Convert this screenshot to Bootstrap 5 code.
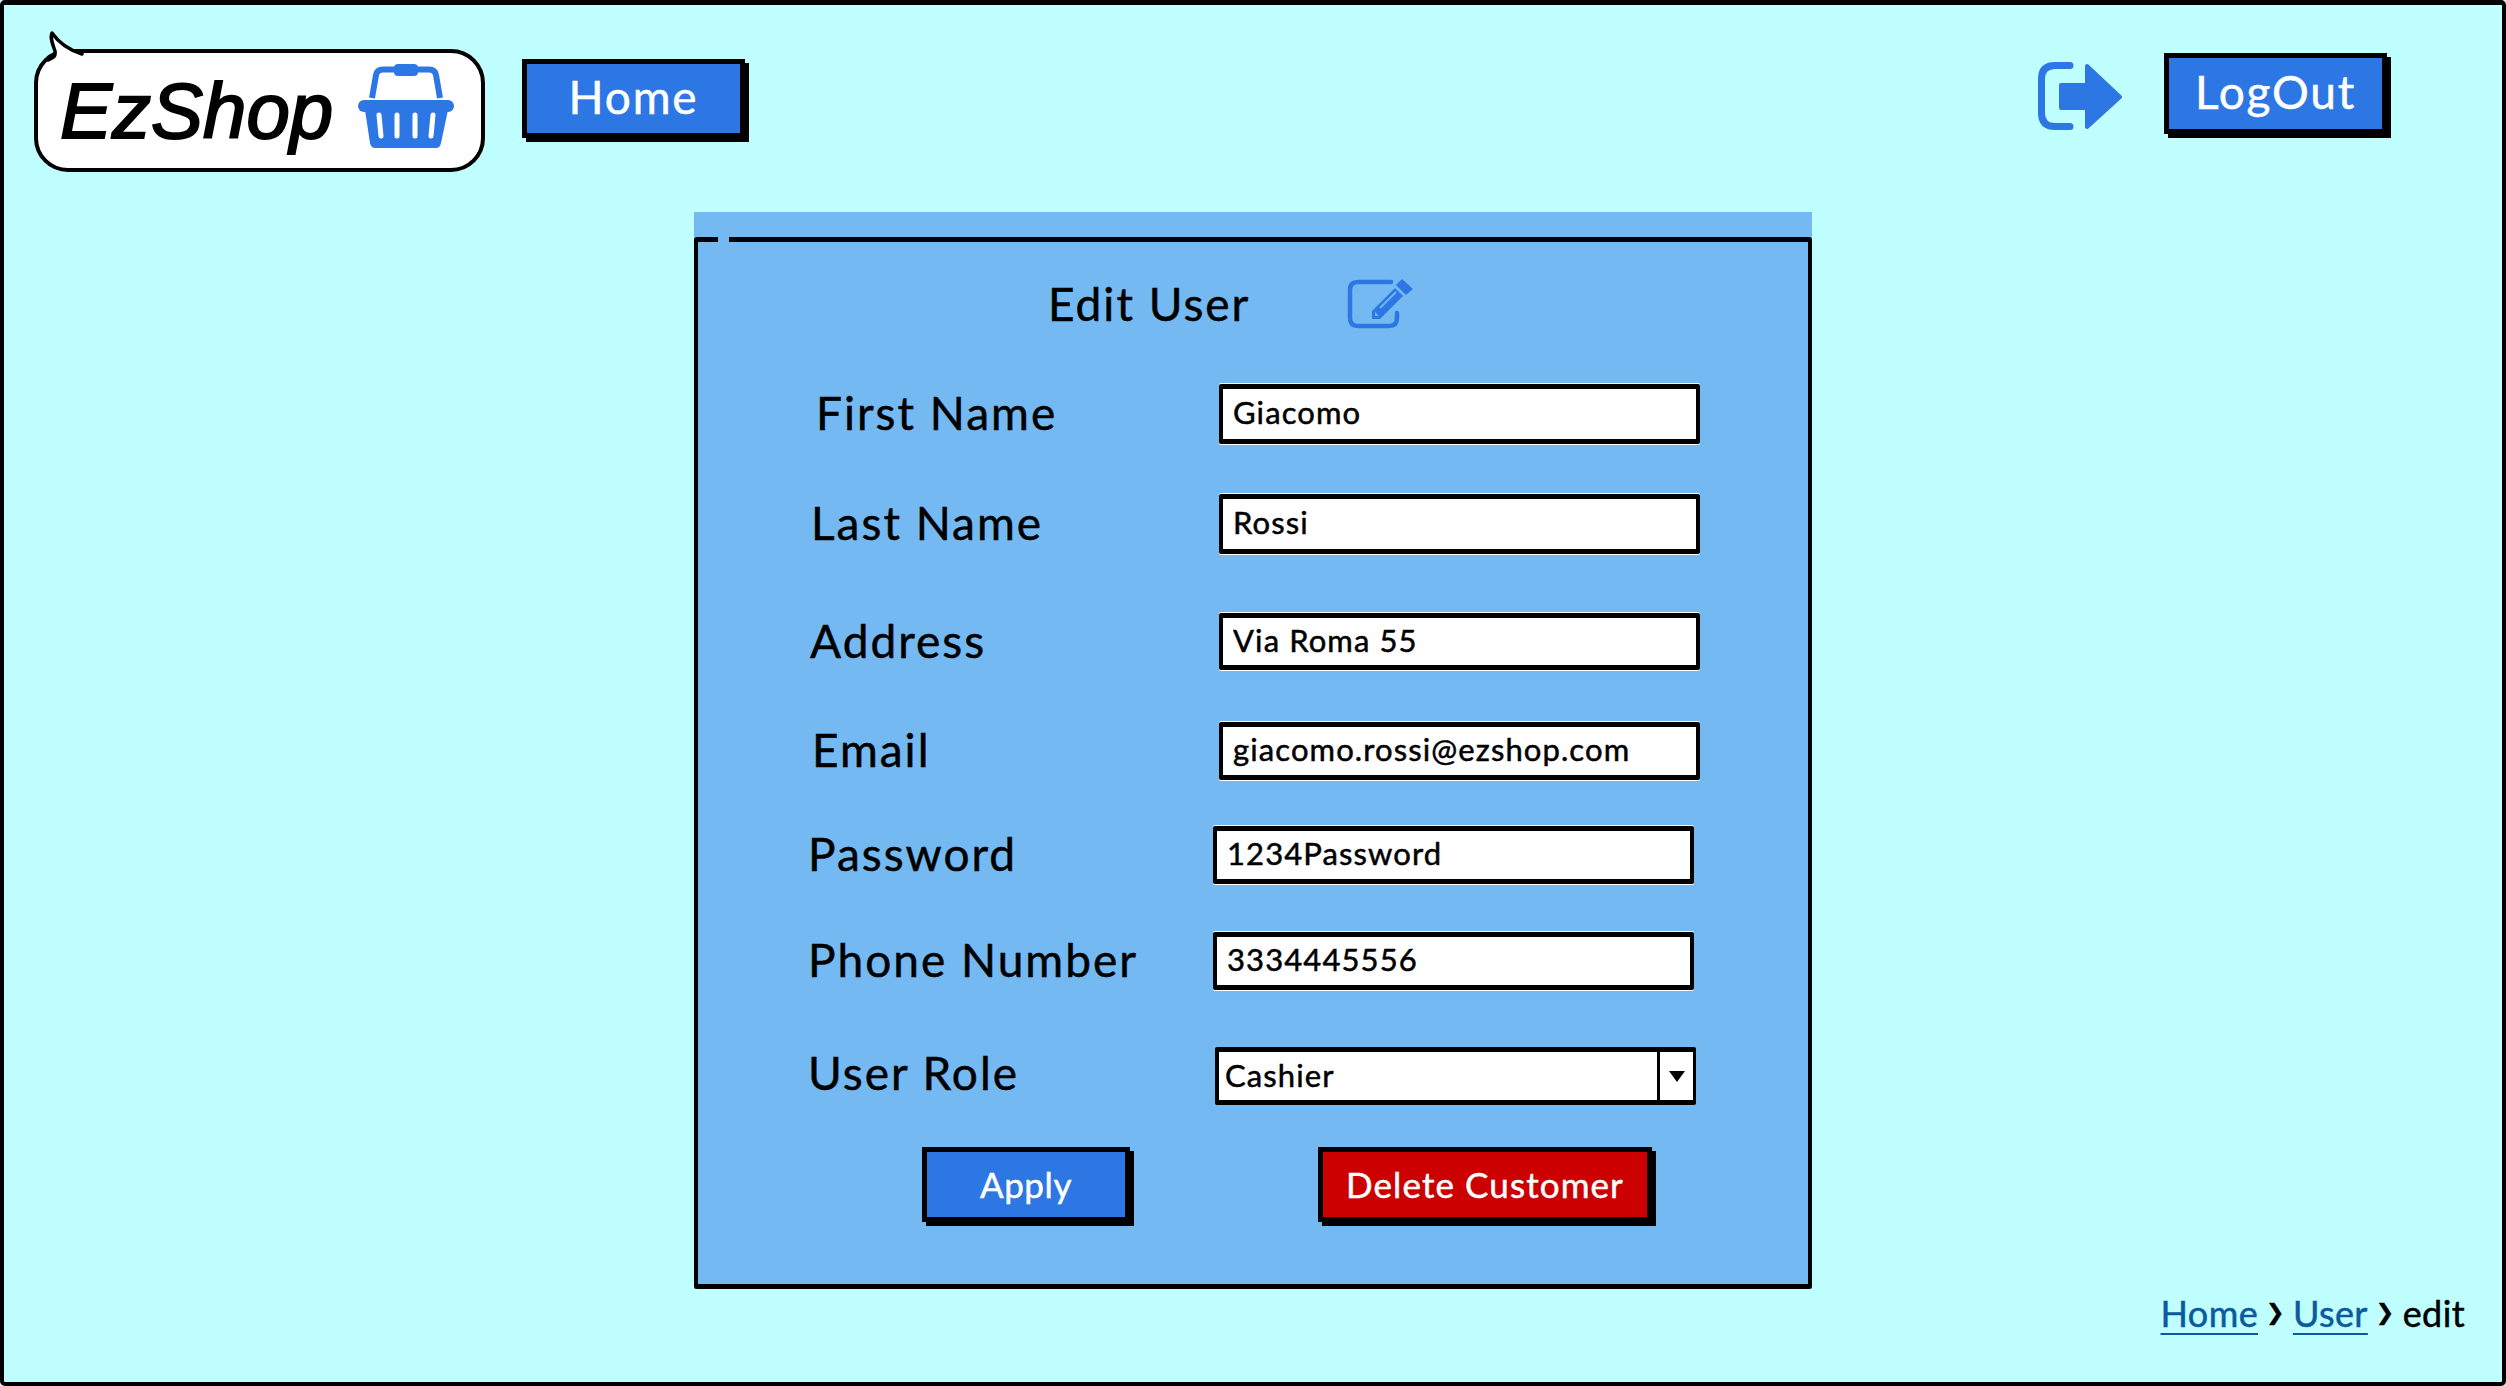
<!DOCTYPE html>
<html lang="en">
<head>
    <meta charset="UTF-8">
    <meta name="viewport" content="width=device-width, initial-scale=1.0">
    <title>EzShop - Edit User</title>
    <link href="https://cdn.jsdelivr.net/npm/bootstrap@5.3.0/dist/css/bootstrap.min.css" rel="stylesheet">
    <style>
        html, body { margin: 0; background: #bfffff; }
        body { font-family: "Lato", "Noto Sans", sans-serif; color: #000; -webkit-text-stroke: .5px currentColor; }

        .sk-frame { width: 2506px; height: 1386px; background: #bfffff; border: 4px solid #000; border-top-width: 5px; border-radius: 5px; }
        .sk-header { height: 207px; padding-left: 30px; padding-right: 115px; }

        /* logo bubble */
        .sk-logo { position: relative; width: 451px; height: 123px; margin-top: 44px; padding-left: 22px; background: #fff; border: 4px solid #000; border-radius: 34px; }
        .sk-logo-tail { position: absolute; left: 9px; top: -22px; width: 40px; height: 34px; }
        .sk-logo-text { font-family: "Liberation Sans", Arial, sans-serif; font-style: italic; font-size: 78px; line-height: 1; -webkit-text-stroke: 2px #000; }
        .sk-basket { width: 96px; height: 84px; margin-left: 25px; margin-top: -9px; }

        /* buttons */
        .sk-btn { border: 5px solid #000; border-radius: 0; box-shadow: 4px 4px 0 #000; color: #fff; background: #2c77e4; font-size: 46px; line-height: 1; letter-spacing: 1.8px; padding: 0 0 3px; display: flex; align-items: center; justify-content: center; }
        .sk-btn:hover { color: #fff; background: #2c77e4; border-color: #000; }
        .sk-btn-home { width: 223px; height: 79px; margin-left: 37px; margin-top: 54px; }
        .sk-btn-logout { width: 223px; height: 81px; margin-left: 42px; margin-top: 48px; }
        .sk-logout-icon { width: 84px; height: 68px; margin-top: 57px; }
        .sk-btn-apply { width: 208px; height: 75px; margin-left: 224px; font-size: 35px; letter-spacing: .6px; padding: 0; }
        .sk-btn-delete { width: 334px; height: 75px; margin-left: 188px; font-size: 35px; letter-spacing: 1.1px; padding: 0; background: #cc0000; }
        .sk-btn-delete:hover { background: #cc0000; }

        /* panel */
        .sk-panel { width: 1118px; margin-left: 690px; padding-top: 25px; background: #74b9f1; }
        .sk-panel-inner { position: relative; height: 1052px; border: 4px solid #000; border-top-width: 5px; border-bottom-width: 5px; border-radius: 3px; padding-top: 39px; }
        .sk-panel-inner::before { content: ""; position: absolute; left: 20px; top: -5px; width: 11px; height: 5px; background: #74b9f1; }
        .sk-title { height: 48px; padding-left: 350px; font-size: 46px; line-height: 46px; letter-spacing: 2px; }
        .sk-edit-icon { width: 80px; height: 70px; margin-left: 90px; margin-top: -10px; flex: none; }

        /* form rows: the mockup is hand placed, every row has its own offsets */
        .sk-row { --lx: 114px; --ix: 521px; --rt: 0px; --ly: -2px; margin-top: var(--rt); height: 58px; }
        .sk-row label { margin-left: var(--lx); margin-top: var(--ly); flex: 0 0 calc(var(--ix) - var(--lx)); font-size: 46px; line-height: 58px; letter-spacing: 2px; white-space: nowrap; }
        .sk-r1 { --lx: 118px; --rt: 55px; height: 60px; }
        .sk-r2 { --lx: 113px; --rt: 50px; height: 60px; }
        .sk-r3 { --lx: 112px; --rt: 59px; height: 57px; }
        .sk-r4 { --rt: 52px; }
        .sk-r5 { --lx: 110px; --ix: 515px; --rt: 46px; }
        .sk-r6 { --lx: 110px; --ix: 515px; --rt: 48px; }
        .sk-r7 { --lx: 110px; --ix: 517px; --rt: 57px; --ly: -7px; }

        .sk-input.form-control { width: 481px; height: 100%; flex: none; padding: 0 0 4px 10px; font-size: 31px; letter-spacing: 1.1px; color: #000; background: #fff; border: solid #000; border-width: 5px 4px; border-radius: 2px; box-shadow: 0 1px 0 #fff, 0 -1px 0 #fff; }
        .sk-selectbox { width: 481px; height: 58px; flex: none; background: #fff; border: 5px solid #000; border-right-width: 3px; border-left-width: 4px; border-radius: 2px; }
        .sk-select.form-select { height: 100%; padding: 0 0 6px 6px; font-size: 31px; letter-spacing: 1.1px; color: #000; background: #fff; border: 0; border-right: 3px solid #000; border-radius: 0; }
        .sk-arrow { flex: 0 0 33px; }
        .sk-arrow::after { content: ""; border-left: 8px solid transparent; border-right: 8px solid transparent; border-top: 11px solid #000; }
        .sk-actions { margin-top: 42px; }

        /* breadcrumb */
        .sk-crumbs { padding-right: 37px; margin-top: 2px; font-size: 36px; line-height: 44px; }
        .sk-crumbs .breadcrumb { --bs-breadcrumb-margin-bottom: 0; --bs-breadcrumb-item-padding-x: 8px; --bs-breadcrumb-divider-color: #000; --bs-breadcrumb-item-active-color: #000; letter-spacing: .4px; }
        .sk-crumbs .breadcrumb-item + .breadcrumb-item::before { content: "\276F"; font-family: "DejaVu Sans", sans-serif; font-size: 22px; }
        .sk-crumbs a { color: #0b5a9e; text-underline-offset: 6px; text-decoration-thickness: 2px; }
    </style>
</head>
<body>

    <div class="sk-frame d-flex flex-column">

        <!-- header -->
        <div class="sk-header d-flex align-items-start">
            <div class="sk-logo d-flex align-items-center">
                <svg class="sk-logo-tail" viewBox="0 0 40 34">
                    <path d="M1 30 C6 27 9 26 8 20 C5 12 3 6 5 2 C12 12 22 19 35 23 L35 34 L1 34 Z" fill="#fff"/>
                    <path d="M1 29 C6 27 9 26 8 20 C5 12 3 6 5 2 C12 12 22 19 35 23" fill="none" stroke="#000" stroke-width="3.500" stroke-linecap="round" stroke-linejoin="round"/>
                </svg>
                <span class="sk-logo-text">EzShop</span>
                <svg class="sk-basket" viewBox="0 0 96 84">
                    <path d="M14 34 L18 11 Q19 5.500 25 5.500 H71 Q77 5.500 78 11 L82 34" fill="none" stroke="#2c77e4" stroke-width="6"/>
                    <rect x="36" y="0" width="24" height="12" rx="4" fill="#2c77e4"/>
                    <rect x="0" y="36" width="96" height="12" rx="6" fill="#2c77e4"/>
                    <path d="M7 46 H90 L83 79 Q82 84 78 84 H17 Q13 84 12 79 Z" fill="#2c77e4"/>
                    <path d="M21 51 L23 72 M39 51 V72 M57 51 V72 M75 51 L73 72" stroke="#fff" stroke-width="5" stroke-linecap="round"/>
                </svg>
            </div>
            <a href="#" class="btn sk-btn sk-btn-home">Home</a>

            <svg class="sk-logout-icon ms-auto" viewBox="0 0 84 68">
                <path d="M32 3.500 H17 Q3.500 3.500 3.500 17 V51 Q3.500 64.500 17 64.500 H32" fill="none" stroke="#2c77e4" stroke-width="7" stroke-linecap="round"/>
                <path d="M23 23 H49 V4 L82 35 L49 65 V46 H23 Z" fill="#2c77e4" stroke="#2c77e4" stroke-width="4" stroke-linejoin="round"/>
            </svg>
            <a href="#" class="btn sk-btn sk-btn-logout">LogOut</a>
        </div>

        <!-- edit form -->
        <div class="sk-panel">
            <form class="sk-panel-inner">
                <div class="sk-title d-flex">
                    <span>Edit User</span>
                    <svg class="sk-edit-icon" viewBox="0 0 80 70">
                        <path d="M51 11 H18 Q10 11 10 19 V47 Q10 55 18 55 H49 Q57 55 57 47 V42" fill="none" stroke="#2c77e4" stroke-width="4.500" stroke-linecap="round"/>
                        <path d="M32 48 V40 L55 17 L63 25 L40 48 Z" fill="#2c77e4"/>
                        <path d="M57 14 L62 9 L72 18 L66 23 Z" fill="#2c77e4" stroke="#2c77e4" stroke-width="1.500" stroke-linejoin="round"/>
                        <path d="M40 37 L56 21" stroke="#74b9f1" stroke-width="1.800"/>
                        <path d="M35 41 L39 45 L35 45 Z" fill="#74b9f1"/>
                    </svg>
                </div>

                <div class="sk-row sk-r1 d-flex align-items-center">
                    <label for="firstName">First Name</label>
                    <input id="firstName" class="form-control sk-input" type="text" value="Giacomo">
                </div>
                <div class="sk-row sk-r2 d-flex align-items-center">
                    <label for="lastName">Last Name</label>
                    <input id="lastName" class="form-control sk-input" type="text" value="Rossi">
                </div>
                <div class="sk-row sk-r3 d-flex align-items-center">
                    <label for="address">Address</label>
                    <input id="address" class="form-control sk-input" type="text" value="Via Roma 55">
                </div>
                <div class="sk-row sk-r4 d-flex align-items-center">
                    <label for="email">Email</label>
                    <input id="email" class="form-control sk-input" type="text" value="giacomo.rossi@ezshop.com">
                </div>
                <div class="sk-row sk-r5 d-flex align-items-center">
                    <label for="password">Password</label>
                    <input id="password" class="form-control sk-input" type="text" value="1234Password">
                </div>
                <div class="sk-row sk-r6 d-flex align-items-center">
                    <label for="phone">Phone Number</label>
                    <input id="phone" class="form-control sk-input" type="text" value="3334445556">
                </div>
                <div class="sk-row sk-r7 d-flex align-items-center">
                    <label for="role">User Role</label>
                    <div class="sk-selectbox d-flex">
                        <select id="role" class="form-select sk-select">
                            <option>Cashier</option>
                            <option>Manager</option>
                            <option>Customer</option>
                        </select>
                        <div class="sk-arrow d-flex align-items-center justify-content-center"></div>
                    </div>
                </div>

                <div class="sk-actions d-flex">
                    <button type="button" class="btn sk-btn sk-btn-apply">Apply</button>
                    <button type="button" class="btn sk-btn sk-btn-delete">Delete Customer</button>
                </div>
            </form>
        </div>

        <!-- breadcrumb -->
        <nav class="sk-crumbs d-flex justify-content-end">
            <ol class="breadcrumb">
                <li class="breadcrumb-item"><a href="#">Home</a></li>
                <li class="breadcrumb-item"><a href="#">User</a></li>
                <li class="breadcrumb-item active">edit</li>
            </ol>
        </nav>
    </div>

    <script src="https://cdn.jsdelivr.net/npm/bootstrap@5.3.0/dist/js/bootstrap.bundle.min.js"></script>
</body>
</html>
